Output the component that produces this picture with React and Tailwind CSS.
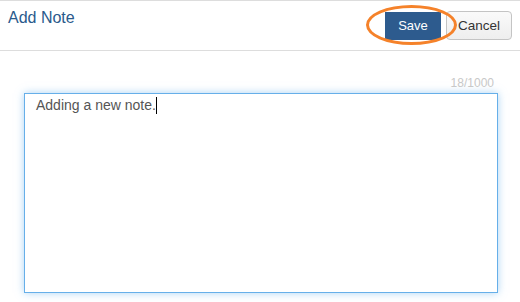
import React from 'react';

const App = () => {
  return (
    <div className="w-[520px] h-[302px] bg-white overflow-hidden" style={{ fontFamily: '"Liberation Sans", Arial, sans-serif' }}>
      {/* Header */}
      <div className="h-[51px] border-t border-b border-[#dddddd] flex justify-between items-start pl-2 pr-2">
        <h1 className="pt-[7px] text-[16px] leading-[20px] text-[#2a5a8c]">Add Note</h1>
        <div className="flex items-start gap-[5px] pt-[10px]">
          <div className="relative">
            <button className="w-[56px] h-[28px] mt-[1px] bg-[#2d5b8e] text-white text-[13px] leading-[28px] text-center">
              Save
            </button>
            {/* highlight ring */}
            <span className="absolute left-[-19px] top-[-6px] w-[91px] h-[40px] rounded-[50%] border-[3px] border-[#f5822a] pointer-events-none" />
          </div>
          <button className="w-[66px] h-[29px] rounded-[4px] border border-[#c4c4c4] bg-gradient-to-b from-[#fafafa] to-[#eeeeee] text-[#333] text-[13.5px] leading-[27px] text-center">
            Cancel
          </button>
        </div>
      </div>

      {/* Body */}
      <div className="pl-6 pr-[22px] pt-[23px]">
        <div className="text-right pr-[4px] text-[12px] leading-[19px] text-[#c8c8c8]">18/1000</div>
        <div className="w-[474px] h-[200px] border border-[#66afe9] shadow-[0_0_8px_rgba(102,175,233,0.55)] px-[11px] pt-px text-[14px] leading-[20px] text-[#555555]">
          Adding a new note.<span className="inline-block w-px h-[17px] bg-black align-[-4px]" />
        </div>
      </div>
    </div>
  );
};

export default App;
